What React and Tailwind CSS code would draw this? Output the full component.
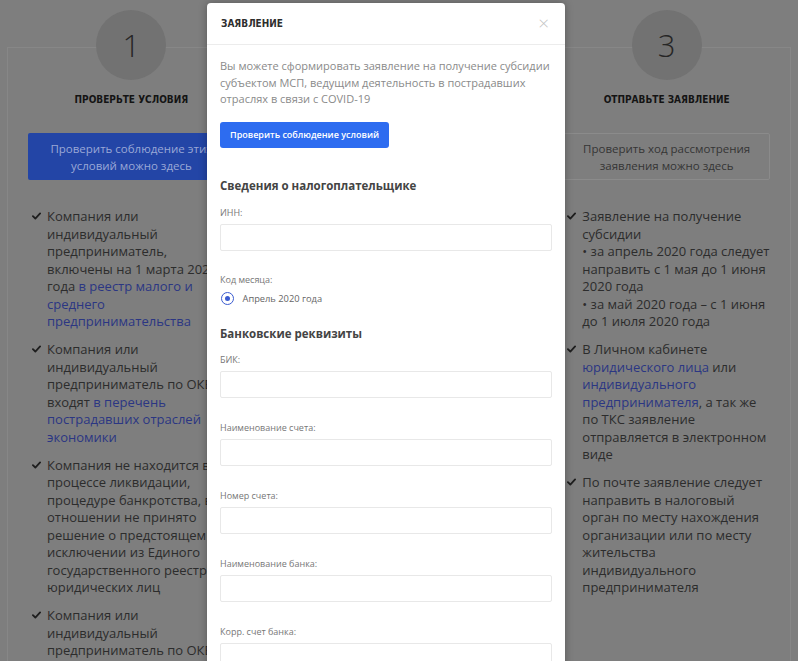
import React from 'react';

const Check = () => (
    <svg viewBox="0 0 10 8" className="w-[9px] h-[8px] shrink-0 mt-[4px]" fill="none">
        <path d="M1 4.2 L3.7 6.8 L9 1.2" stroke="#1e1e1e" strokeWidth="2" strokeLinecap="round" strokeLinejoin="round" />
    </svg>
);

const Link = ({ children }) => <span className="text-[#2b3683]">{children}</span>;

const stepTitle = "font-['DejaVu_Sans_Condensed','DejaVu_Sans',sans-serif] font-bold uppercase";

const Step = ({ num, title, button, primary, items }) => (
    <div className="flex flex-col border border-[#878787] h-[700px]">
        <div className="mx-auto -mt-[38px] flex size-[70px] items-center justify-center rounded-full bg-[#727272] text-[31px] font-light text-[#262626]">
            {num}
        </div>
        <div className={`mt-[13px] text-center text-[10px] leading-[14px] text-[#141414] ${stepTitle}`}>
            {title}
        </div>
        {button && (
            <div
                className={
                    primary
                        ? 'mx-5 mt-[26px] flex h-[47px] items-center justify-center rounded-[2px] bg-[#2345a6] px-2 text-center text-[11.5px] leading-[17px] text-[#9aa8d6]'
                        : 'mx-5 mt-[26px] flex h-[47px] items-center justify-center rounded-[2px] border border-[#8b8b8b] px-2 text-center text-[11.5px] leading-[17px] text-[#353535]'
                }
            >
                {button}
            </div>
        )}
        {items && (
            <ul className="mt-[28px] flex flex-col gap-[10.5px] pl-[24px] pr-[18px]">
                {items.map((item, i) => (
                    <li key={i} className="flex gap-[6px]">
                        <Check />
                        <div className="text-[13px] leading-[17.5px] text-[#2c2c2c]">{item}</div>
                    </li>
                ))}
            </ul>
        )}
    </div>
);

const Field = ({ label, first }) => (
    <div className={first ? 'mt-[11px]' : 'mt-[23px]'}>
        <div className="text-[9px] leading-[14px] text-[#777]">{label}</div>
        <div className="mt-[4.5px] h-[26.5px] rounded-[2px] border border-[#e8e8e8] bg-white" />
    </div>
);

const Modal = () => (
    <div className="absolute left-[207px] top-[3px] h-[700px] w-[358px] rounded-[4px] bg-white shadow-[0_0_8px_rgba(0,0,0,0.3)]">
        <div className="flex h-[42px] items-center justify-between border-b border-[#ececec] pl-[14px] pr-[16px]">
            <div className={`text-[10px] leading-[14px] text-[#2e2e2e] ${stepTitle}`}>Заявление</div>
            <div className="text-[19px] font-light leading-none text-[#c4c4c4]">×</div>
        </div>
        <div className="px-[13px] pt-[13px]">
            <p className="text-[11px] leading-[16.5px] text-[#8a8a8a]">
                Вы можете сформировать заявление на получение субсидии субъектом МСП, ведущим деятельность в пострадавших отраслях в связи с COVID-19
            </p>
            <button className="mt-[14px] h-[26.5px] rounded-[3px] bg-[#2d6cf0] px-[10px] text-[9px] font-semibold text-white">
                Проверить соблюдение условий
            </button>
            <h3 className="mt-[28.5px] text-[11.5px] font-bold leading-[18px] text-[#444]">Сведения о налогоплательщике</h3>
            <Field label="ИНН:" first />
            <div className="mt-[22px] text-[9px] leading-[14px] text-[#777]">Код месяца:</div>
            <div className="mt-[5px] flex h-[14px] items-center gap-[9px] pl-[1px]">
                <span className="flex size-[12.5px] items-center justify-center rounded-full border-[1.5px] border-[#3a5bd0]">
                    <span className="size-[5.5px] rounded-full bg-[#3a5bd0]" />
                </span>
                <span className="text-[9.3px] text-[#666]">Апрель 2020 года</span>
            </div>
            <h3 className="mt-[19px] text-[11.5px] font-bold leading-[18px] text-[#444]">Банковские реквизиты</h3>
            <div className="-mt-[1px]" />
            <Field label="БИК:" first />
            <Field label="Наименование счета:" />
            <Field label="Номер счета:" />
            <Field label="Наименование банка:" />
            <Field label="Корр. счет банка:" />
        </div>
    </div>
);

const App = () => {
    const first = [
        <>Компания или индивидуальный предприниматель,<br />включены на 1 марта 2020 года <Link>в реестр малого и среднего предпринимательства</Link></>,
        <>Компания или индивидуальный предприниматель по ОКВЭД входят <Link>в перечень пострадавших отраслей экономики</Link></>,
        <>Компания не находится в процессе ликвидации, процедуре банкротства, в отношении не принято решение о предстоящем исключении из Единого государственного реестра юридических лиц</>,
        <>Компания или индивидуальный предприниматель по ОКВЭД не являются получателями иной поддержки</>,
    ];
    const third = [
        <>Заявление на получение субсидии<br />• за апрель 2020 года следует направить с 1 мая до 1 июня 2020 года<br />• за май 2020 года – с 1 июня до 1 июля 2020 года</>,
        <>В Личном кабинете <Link>юридического лица</Link> или <Link>индивидуального предпринимателя</Link>, а так же по ТКС заявление отправляется в электронном виде</>,
        <>По почте заявление следует направить в налоговый орган по месту нахождения организации или по месту жительства индивидуального предпринимателя</>,
    ];

    return (
        <div className="relative h-[661px] overflow-hidden bg-[#7e7e7e] font-['Open_Sans',sans-serif]">
            <div className="grid grid-cols-3 gap-[19px] px-[7px] pt-[47px]">
                <Step num="1" title="Проверьте условия" button={<>Проверить соблюдение этих<br />условий можно здесь</>} primary items={first} />
                <Step num="2" title="Заполните заявление" />
                <Step num="3" title="Отправьте заявление" button={<>Проверить ход рассмотрения<br />заявления можно здесь</>} items={third} />
            </div>
            <Modal />
        </div>
    );
};

export default App;
